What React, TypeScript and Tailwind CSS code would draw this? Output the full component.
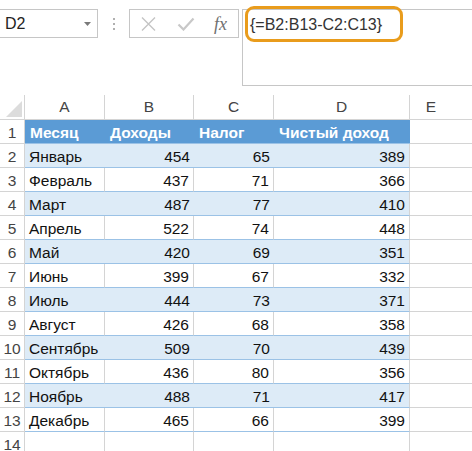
import React from 'react';

type Row = [string, number, number, number];

const data: Row[] = [
  ['Январь', 454, 65, 389],
  ['Февраль', 437, 71, 366],
  ['Март', 487, 77, 410],
  ['Апрель', 522, 74, 448],
  ['Май', 420, 69, 351],
  ['Июнь', 399, 67, 332],
  ['Июль', 444, 73, 371],
  ['Август', 426, 68, 358],
  ['Сентябрь', 509, 70, 439],
  ['Октябрь', 436, 80, 356],
  ['Ноябрь', 488, 71, 417],
  ['Декабрь', 465, 66, 399],
];

const widths = ['w-[80px]', 'w-[89px]', 'w-[80px]', 'w-[136px]'];

function RowHead({ n }: { n: number }) {
  return (
    <div className="w-[25px] shrink-0 h-full flex items-end justify-center pb-[3px] border-r border-b border-[#d4d4d4] text-[#444]">
      {n}
    </div>
  );
}

function TopBar() {
  return (
    <div className="h-[95px] flex items-start pt-[9px]">
      <div className="relative w-[98px] h-[29px] border border-l-0 border-[#c6c6c6] flex items-center pl-[5px] text-[16px] text-[#222]">
        D2
        <svg className="absolute left-[84px] top-[12px]" width="7" height="4" viewBox="0 0 7 4">
          <path d="M0 0 H7 L3.5 4 Z" fill="#7a7a7a" />
        </svg>
      </div>
      <div className="w-[31px] h-[29px] flex flex-col items-center justify-center gap-[3px]">
        <span className="w-[2px] h-[2px] bg-[#b0b0b0]" />
        <span className="w-[2px] h-[2px] bg-[#b0b0b0]" />
        <span className="w-[2px] h-[2px] bg-[#b0b0b0]" />
      </div>
      <div className="w-[110px] h-[29px] border border-[#c6c6c6] flex items-center px-[10px] justify-between">
        <svg width="17" height="16" viewBox="0 0 17 16">
          <path d="M2 1.5 L15 14.5 M15 1.5 L2 14.5" stroke="#c4c4c4" strokeWidth="1.4" fill="none" />
        </svg>
        <svg width="18" height="14" viewBox="0 0 18 14">
          <path d="M1.5 7.5 L6.5 12.5 L16.5 1.5" stroke="#c8c8c8" strokeWidth="2.2" fill="none" />
        </svg>
        <span className="italic text-[18px] text-[#707070] leading-none pr-[1px]" style={{ fontFamily: '"Liberation Serif", serif' }}>
          fx
        </span>
      </div>
      <div className="relative ml-[3px] flex-1 h-[77px] border border-r-0 border-[#c6c6c6] pl-[7px] pt-[7px] text-[16px] leading-none text-[#333]">
        {'{=B2:B13-C2:C13}'}
        <div className="absolute left-[2px] top-[-4px] w-[158px] h-[36px] border-[3px] border-[#e99c1c] rounded-[9px]" />
      </div>
    </div>
  );
}

export default function App() {
  return (
    <div
      className="w-[472px] h-[451px] overflow-hidden bg-white text-[15.5px] leading-none text-[#111]"
      style={{ fontFamily: '"Liberation Sans", Arial, sans-serif' }}
    >
      <TopBar />

      {/* column headers */}
      <div className="h-[25px] flex text-[#444]">
        <div className="w-[25px] shrink-0 h-full border-r border-b border-[#d4d4d4] flex items-end justify-end pb-[2px] pr-[2px]">
          <svg width="16" height="16" viewBox="0 0 16 16">
            <path d="M16 0 V16 H0 Z" fill="#dcdcdc" />
          </svg>
        </div>
        {['A', 'B', 'C', 'D'].map((l, i) => (
          <div key={l} className={`${widths[i]} shrink-0 h-full border-r border-b border-[#d4d4d4] flex items-end justify-center pb-[5px]`}>
            {l}
          </div>
        ))}
        <div className="flex-1 h-full border-b border-[#d4d4d4] flex items-end justify-center pb-[5px] pr-[20px]">E</div>
      </div>

      {/* row 1: table header */}
      <div className="h-[24px] flex">
        <RowHead n={1} />
        {['Месяц', 'Доходы', 'Налог', 'Чистый доход'].map((t, i) => (
          <div key={t} className={`${widths[i]} shrink-0 h-full bg-[#5b9bd5] border-b border-[#9bc2e6] flex items-end pb-[3px] pl-[5px] font-bold text-white`}>
            {t}
          </div>
        ))}
        <div className="flex-1 h-full border-b border-[#d4d4d4]" />
      </div>

      {data.map((r, idx) => {
        const band = idx % 2 === 0;
        const cell = band
          ? 'bg-[#ddebf7] border-b border-[#9bc2e6]'
          : 'bg-white border-r border-b border-r-[#d4d4d4] border-b-[#9bc2e6]';
        return (
          <div key={r[0]} className="h-[24px] flex">
            <RowHead n={idx + 2} />
            <div className={`${widths[0]} shrink-0 h-full ${cell} flex items-end pb-[3px] pl-[4px]`}>{r[0]}</div>
            <div className={`${widths[1]} shrink-0 h-full ${cell} flex items-end justify-end pb-[3px] pr-[4px]`}>{r[1]}</div>
            <div className={`${widths[2]} shrink-0 h-full ${cell} flex items-end justify-end pb-[3px] pr-[4px]`}>{r[2]}</div>
            <div className={`${widths[3]} shrink-0 h-full ${band ? 'bg-[#ddebf7]' : 'bg-white'} border-r border-b border-r-[#d4d4d4] border-b-[#9bc2e6] flex items-end justify-end pb-[3px] pr-[4px]`}>
              {r[3]}
            </div>
            <div className="flex-1 h-full border-b border-[#d4d4d4]" />
          </div>
        );
      })}

      {/* row 14 */}
      <div className="h-[24px] flex">
        <RowHead n={14} />
        {widths.map((w, i) => (
          <div key={i} className={`${w} shrink-0 h-full border-r border-b border-[#d4d4d4]`} />
        ))}
        <div className="flex-1 h-full border-b border-[#d4d4d4]" />
      </div>
    </div>
  );
}
